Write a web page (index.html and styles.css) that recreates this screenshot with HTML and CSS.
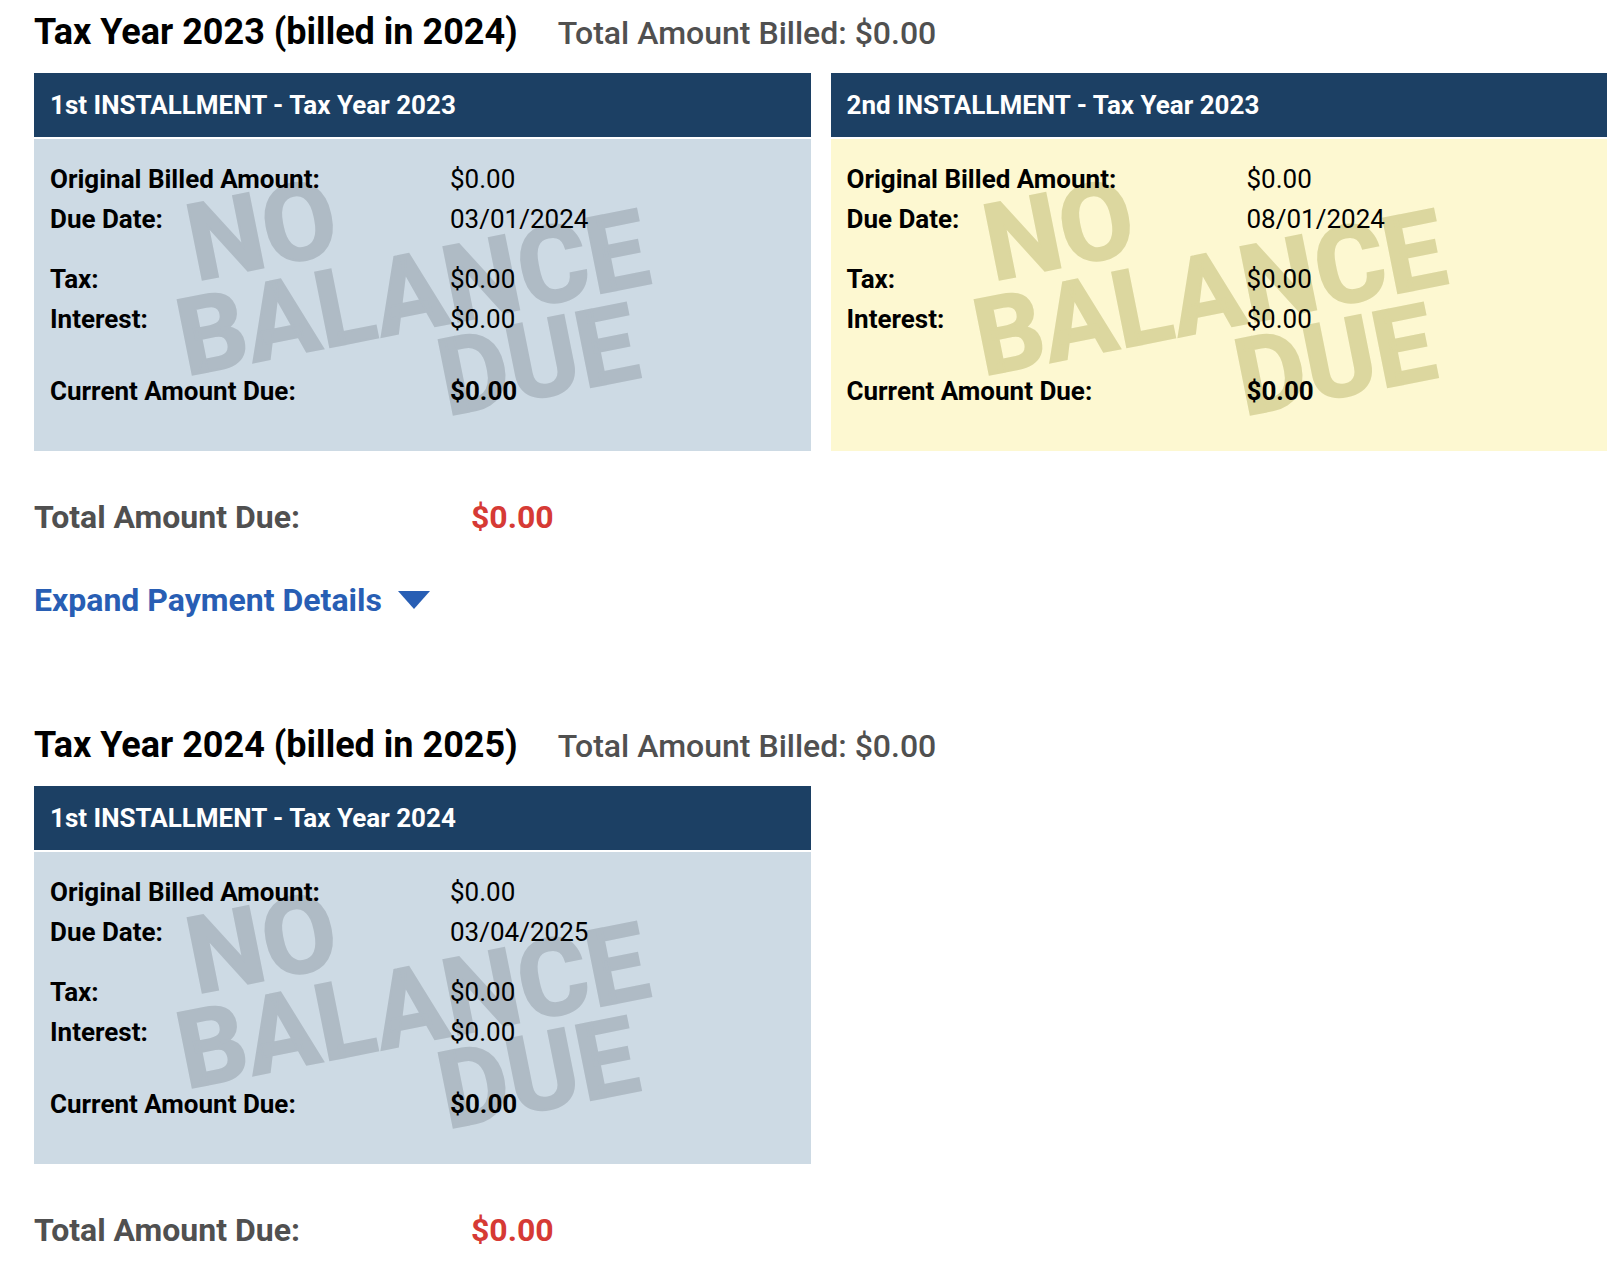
FILE: index.html
```
<!DOCTYPE html>
<html lang="en">
  <head>
    <meta charset="utf-8" />
    <title>Tax Bills</title>

    <link rel="stylesheet" href="styles.css">
  </head>

  <body>

    <section class="tax-year">
      <div class="year-header">
        <h2>Tax Year 2023 (billed in 2024)</h2>
        <p class="billed">Total Amount Billed: $0.00</p>
      </div>

      <div class="installments">
        <div class="installment first">
          <h3>1st INSTALLMENT - Tax Year 2023</h3>
          <div class="installment-body">
            <svg class="stamp" width="520" height="312" viewBox="0 0 520 312">
              <text transform="translate(42 142) rotate(-11.3)">NO</text>
              <text transform="translate(32 237) rotate(-11.3)">BALANCE</text>
              <text transform="translate(293 277) rotate(-11.3)">DUE</text>
            </svg>
            <dl>
              <dt>Original Billed Amount:</dt><dd>$0.00</dd>
              <dt>Due Date:</dt><dd>03/01/2024</dd>
            </dl>
            <dl>
              <dt>Tax:</dt><dd>$0.00</dd>
              <dt>Interest:</dt><dd>$0.00</dd>
            </dl>
            <dl class="current">
              <dt>Current Amount Due:</dt><dd>$0.00</dd>
            </dl>
          </div>
        </div>

        <div class="installment second">
          <h3>2nd INSTALLMENT - Tax Year 2023</h3>
          <div class="installment-body">
            <svg class="stamp" width="520" height="312" viewBox="0 0 520 312">
              <text transform="translate(42 142) rotate(-11.3)">NO</text>
              <text transform="translate(32 237) rotate(-11.3)">BALANCE</text>
              <text transform="translate(293 277) rotate(-11.3)">DUE</text>
            </svg>
            <dl>
              <dt>Original Billed Amount:</dt><dd>$0.00</dd>
              <dt>Due Date:</dt><dd>08/01/2024</dd>
            </dl>
            <dl>
              <dt>Tax:</dt><dd>$0.00</dd>
              <dt>Interest:</dt><dd>$0.00</dd>
            </dl>
            <dl class="current">
              <dt>Current Amount Due:</dt><dd>$0.00</dd>
            </dl>
          </div>
        </div>
      </div>

      <div class="total">
        <span class="total-label">Total Amount Due:</span>
        <span class="total-value">$0.00</span>
      </div>

      <button type="button" class="expand">
        Expand Payment Details
        <svg width="32" height="18" viewBox="0 0 32 18"><path d="M0 0H32L16 18Z" /></svg>
      </button>
    </section>

    <section class="tax-year">
      <div class="year-header">
        <h2>Tax Year 2024 (billed in 2025)</h2>
        <p class="billed">Total Amount Billed: $0.00</p>
      </div>

      <div class="installments">
        <div class="installment first">
          <h3>1st INSTALLMENT - Tax Year 2024</h3>
          <div class="installment-body">
            <svg class="stamp" width="520" height="312" viewBox="0 0 520 312">
              <text transform="translate(42 142) rotate(-11.3)">NO</text>
              <text transform="translate(32 237) rotate(-11.3)">BALANCE</text>
              <text transform="translate(293 277) rotate(-11.3)">DUE</text>
            </svg>
            <dl>
              <dt>Original Billed Amount:</dt><dd>$0.00</dd>
              <dt>Due Date:</dt><dd>03/04/2025</dd>
            </dl>
            <dl>
              <dt>Tax:</dt><dd>$0.00</dd>
              <dt>Interest:</dt><dd>$0.00</dd>
            </dl>
            <dl class="current">
              <dt>Current Amount Due:</dt><dd>$0.00</dd>
            </dl>
          </div>
        </div>
      </div>

      <div class="total">
        <span class="total-label">Total Amount Due:</span>
        <span class="total-value">$0.00</span>
      </div>
    </section>

  </body>
</html>
```

FILE: styles.css
```
body {
  font-family: Roboto, Arial, sans-serif;
  font-size: 26px;
  line-height: 40px;
  color: #000;
  background-color: #fff;
  margin: 0;
  padding: 0 15px 0 34px;
}

h2,
h3,
p,
dl,
dd {
  margin: 0;
}

.tax-year {
  padding-top: 12px;
  margin-bottom: 93px;
}

.tax-year:last-child {
  margin-bottom: 0;
}

.year-header {
  display: flex;
  align-items: baseline;
  gap: 40px;
  margin-bottom: 20px;
}

h2 {
  font-size: 36px;
  font-weight: 700;
}

.billed {
  font-size: 32px;
  font-weight: 500;
  color: #505050;
}

.installments {
  display: grid;
  grid-template-columns: 1fr 1fr;
  gap: 20px;
}

h3 {
  font-size: 26px;
  font-weight: 700;
  color: #fff;
  background-color: #1c4064;
  padding: 12px 16px;
  margin-bottom: 2px;
}

.installment-body {
  position: relative;
  padding: 20px 16px 40px;
}

.first .installment-body {
  background-color: #cddae4;
}

.second .installment-body {
  background-color: #fdf8d1;
}

/* watermark behind the amounts */
.stamp {
  position: absolute;
  top: 0;
  left: 120px;
  font-size: 107px;
  font-weight: 700;
  stroke-width: 2px;
}

.first .stamp {
  fill: #afbbc5;
  stroke: #afbbc5;
}

.second .stamp {
  fill: #dcd79f;
  stroke: #dcd79f;
}

dl {
  position: relative;
  display: grid;
  grid-template-columns: 400px 1fr;
  margin-bottom: 20px;
}

dt {
  font-weight: 700;
}

.current {
  font-weight: 700;
  margin-top: 32px;
  margin-bottom: 0;
}

.total {
  display: flex;
  font-size: 32px;
  font-weight: 700;
  margin-top: 46px;
}

.total-label {
  width: 437px;
  color: #505050;
}

.total-value {
  color: #d63a35;
}

.expand {
  display: flex;
  align-items: center;
  gap: 16px;
  font-family: inherit;
  font-size: 32px;
  font-weight: 700;
  line-height: 40px;
  color: #285eb4;
  background: none;
  border: none;
  padding: 0;
  margin-top: 43px;
  cursor: pointer;
}

.expand svg {
  fill: #285eb4;
}
```
